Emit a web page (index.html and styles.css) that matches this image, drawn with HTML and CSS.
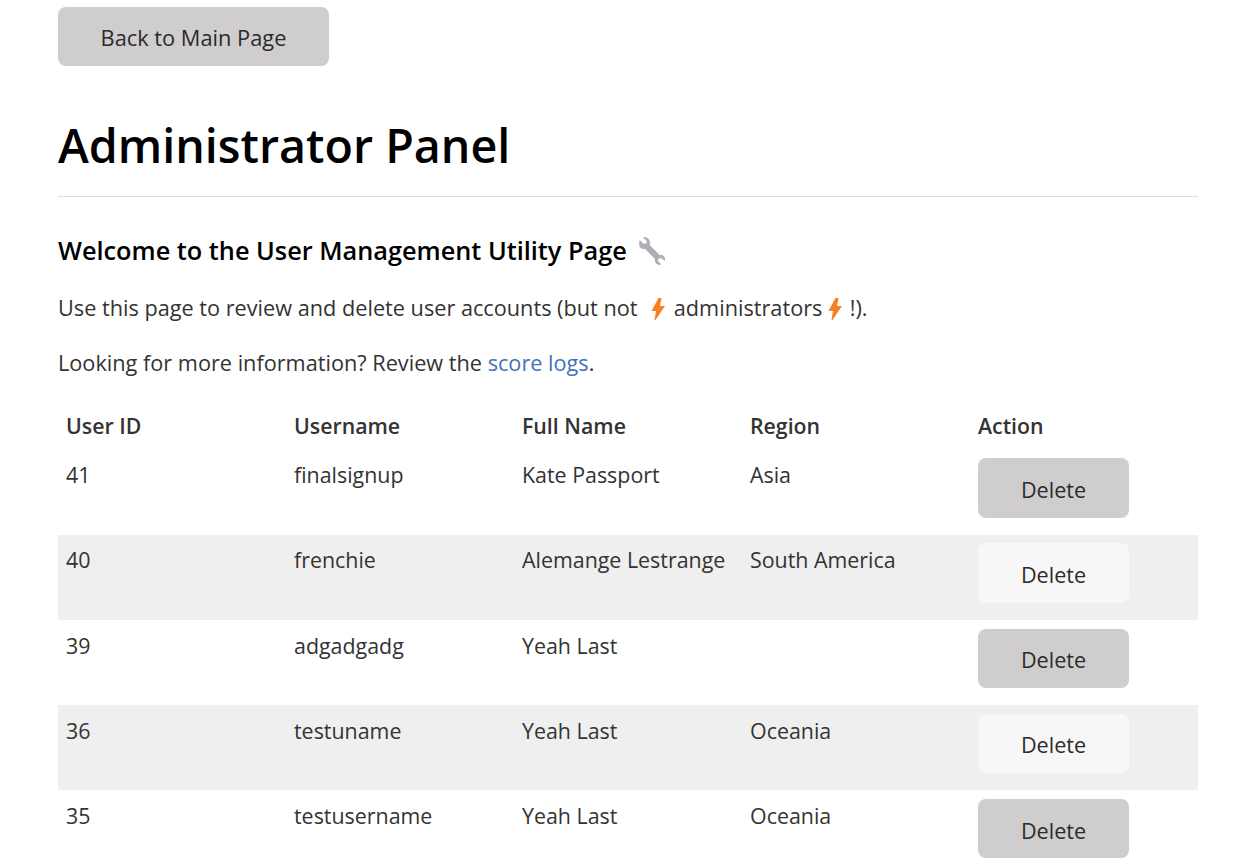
FILE: index.html
```html
<!DOCTYPE html>
<html lang="en">
<head>
  <meta charset="UTF-8" />
  <meta name="viewport" content="width=device-width, initial-scale=1.0"/>
  <title>Administrator Panel</title>
  <link rel="stylesheet" href="styles.css">
</head>
<body>
  <div class="container">
    <button class="btn back-btn" type="button">Back to Main Page</button>

    <h1>Administrator Panel</h1>
    <hr />

    <h3>Welcome to the User Management Utility Page
      <svg class="wrench" viewBox="0 0 32 32" width="29" height="29" aria-hidden="true">
        <path d="M4.2 3.4 L8.6 7.6 L11.4 7 L12 4.6 L7.6 .6 C11.4 -.4 15 2 15.4 5.6 C15.6 7 15.4 7.8 15 8.8 L26.4 20 C28.2 19.6 30 20 31 21.4 C32.2 23 32.4 25 31.6 26.6 L27.8 23.2 L24.8 24 L24.2 26.6 L28 30.4 C25.8 31.2 23.4 30.6 22 29 C20.8 27.6 20.6 25.8 21 24.2 L9.8 13 C8.4 13.4 6.8 13.2 5.4 12.4 C3.2 10.8 3 6.6 4.2 3.4 Z"/>
      </svg>
    </h3>

    <p>Use this page to review and delete user accounts (but not
      <svg class="bolt first" viewBox="0 0 14 22" width="14" height="22" aria-hidden="true"><path d="M7.5 0 L10.5 0 L9 8 L14 8 L4.5 22 L3.5 22 L5 13 L0.5 13 Z"/></svg>
      administrators
      <svg class="bolt second" viewBox="0 0 14 22" width="14" height="22" aria-hidden="true"><path d="M7.5 0 L10.5 0 L9 8 L14 8 L4.5 22 L3.5 22 L5 13 L0.5 13 Z"/></svg>
      !).</p>
    <p>Looking for more information? Review the <a href="#">score logs</a>.</p>

    <table>
      <thead>
        <tr>
          <th>User ID</th>
          <th>Username</th>
          <th>Full Name</th>
          <th>Region</th>
          <th>Action</th>
        </tr>
      </thead>
      <tbody>
        <tr>
          <td>41</td><td>finalsignup</td><td>Kate Passport</td><td>Asia</td>
          <td><button class="btn delete-btn" type="button">Delete</button></td>
        </tr>
        <tr>
          <td>40</td><td>frenchie</td><td>Alemange Lestrange</td><td>South America</td>
          <td><button class="btn delete-btn" type="button">Delete</button></td>
        </tr>
        <tr>
          <td>39</td><td>adgadgadg</td><td>Yeah Last</td><td></td>
          <td><button class="btn delete-btn" type="button">Delete</button></td>
        </tr>
        <tr>
          <td>36</td><td>testuname</td><td>Yeah Last</td><td>Oceania</td>
          <td><button class="btn delete-btn" type="button">Delete</button></td>
        </tr>
        <tr>
          <td>35</td><td>testusername</td><td>Yeah Last</td><td>Oceania</td>
          <td><button class="btn delete-btn" type="button">Delete</button></td>
        </tr>
      </tbody>
    </table>
  </div>
</body>
</html>
```

FILE: styles.css
```css
body {
  margin: 0;
  font-family: "Open Sans", "Noto Sans", sans-serif;
  font-size: 21.7px;
  line-height: 32px;
  color: #333;
  background-color: #fff;
}

.container {
  width: 1140px;
  margin-left: 58px;
  padding-top: 7px;
}

.btn {
  display: block;
  border: none;
  border-radius: 8px;
  background-color: #cfcdce;
  color: #2b2b2b;
  font-family: inherit;
  font-size: 21.6px;
  cursor: pointer;
}

.back-btn {
  width: 271px;
  height: 59px;
  padding-top: 2px;
  font-size: 21.8px;
}

h1 {
  margin: 49px 0 0;
  font-size: 46.6px;
  line-height: 60px;
  font-weight: 600;
  color: #000;
}

hr {
  margin: 21px 0 0;
  border: none;
  border-top: 1px solid #ddd;
}

h3 {
  margin: 35px 0 0;
  font-size: 25.3px;
  line-height: 36px;
  font-weight: 600;
  color: #000;
}

.wrench {
  fill: #b0adb8;
  vertical-align: -6px;
  margin-left: 3px;
}

p {
  margin: 23px 0 0;
}

h3 + p {
  margin-top: 24px;
}

.bolt {
  fill: #f58025;
  vertical-align: -4px;
}

.bolt.first {
  margin: 0 3px 0 8px;
}

.bolt.second {
  margin: 0 2px 0 0;
}

a {
  color: #4472b8;
  text-decoration: none;
}

table {
  width: 100%;
  margin-top: 23px;
  border-collapse: collapse;
  table-layout: fixed;
  font-size: 21.4px;
}

th, td {
  padding: 8px;
  text-align: left;
  vertical-align: top;
}

th {
  font-weight: 600;
  height: 27px;
  font-size: 21.3px;
}

td {
  height: 69.1px;
  padding-top: 9.4px;
  padding-bottom: 6.6px;
}

td:last-child {
  padding-top: 8.4px;
  padding-bottom: 7.6px;
}

tbody tr:nth-child(even) {
  background-color: #efefef;
}

tbody tr:nth-child(even) .delete-btn {
  background-color: #f7f7f7;
}

.delete-btn {
  width: 151px;
  height: 59.6px;
  padding-top: 4px;
}
```
